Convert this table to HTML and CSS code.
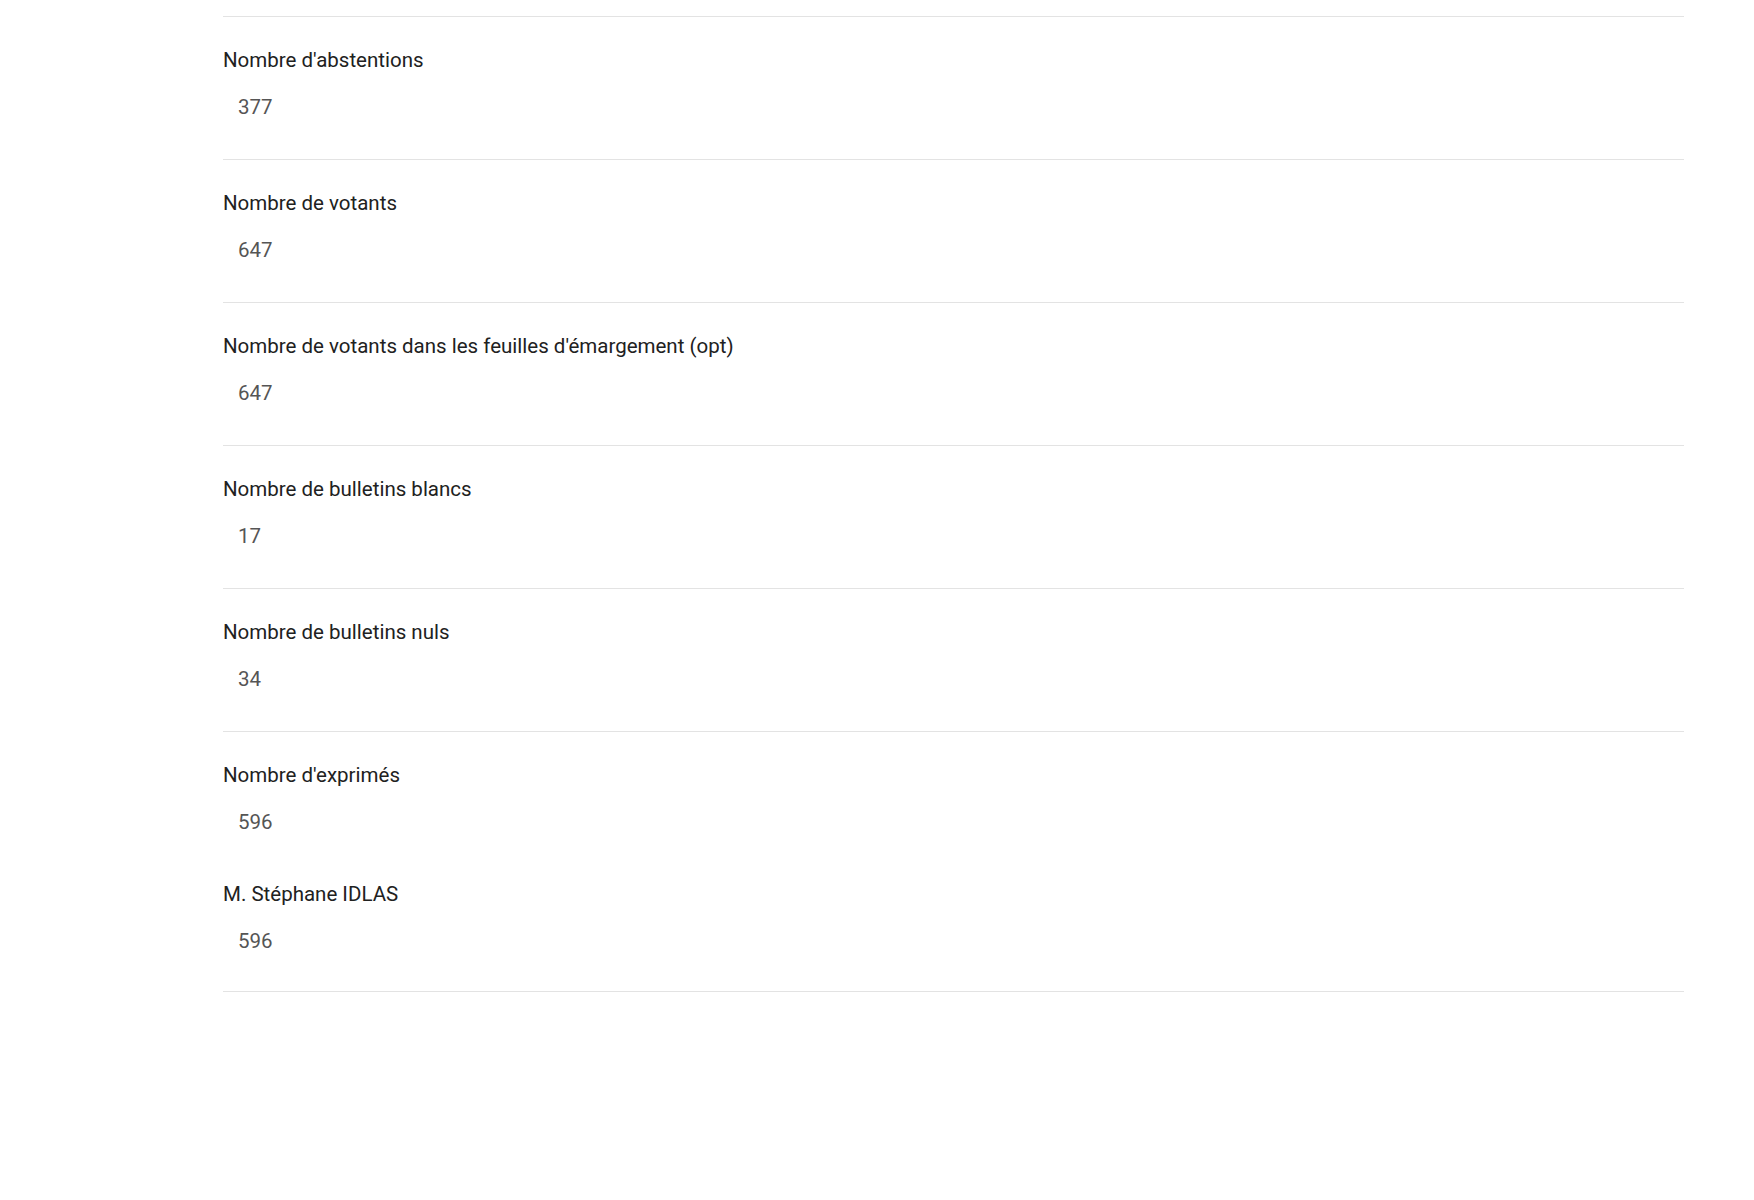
FILE: index.html
```html
<!DOCTYPE html>
<html lang="fr">
<head>
<meta charset="utf-8">
<title>Résultats</title>
<link rel="stylesheet" href="styles.css">
</head>
<body>
<div class="page">
  <div class="list">
    <div class="row">
      <div class="pair"><div class="label">Nombre d'abstentions</div><div class="value">377</div></div>
    </div>
    <div class="row">
      <div class="pair"><div class="label">Nombre de votants</div><div class="value">647</div></div>
    </div>
    <div class="row">
      <div class="pair"><div class="label">Nombre de votants dans les feuilles d'émargement (opt)</div><div class="value">647</div></div>
    </div>
    <div class="row">
      <div class="pair"><div class="label">Nombre de bulletins blancs</div><div class="value">17</div></div>
    </div>
    <div class="row">
      <div class="pair"><div class="label">Nombre de bulletins nuls</div><div class="value">34</div></div>
    </div>
    <div class="row">
      <div class="pair"><div class="label">Nombre d'exprimés</div><div class="value">596</div></div>
      <div class="pair"><div class="label">M. Stéphane IDLAS</div><div class="value">596</div></div>
    </div>
  </div>
</div>
</body>
</html>
```
FILE: styles.css
```css
html, body {
  margin: 0;
  padding: 0;
  background: #ffffff;
}
.page {
  padding: 16px 70px 0 223px;
  font-family: Roboto, "Liberation Sans", sans-serif;
}
.list {
  display: flex;
  flex-direction: column;
}
.row {
  border-top: 1px solid #e3e3e3;
  padding: 31px 0 40px;
  display: flex;
  flex-direction: column;
  gap: 48px;
}
.row:last-child {
  border-bottom: 1px solid #e3e3e3;
  padding-bottom: 38px;
}
.pair {
  display: flex;
  flex-direction: column;
  gap: 23px;
}
.label {
  font-size: 20.5px;
  line-height: 24px;
  color: #212121;
}
.value {
  font-size: 20.5px;
  line-height: 24px;
  color: #555555;
  padding-left: 15px;
}
```
